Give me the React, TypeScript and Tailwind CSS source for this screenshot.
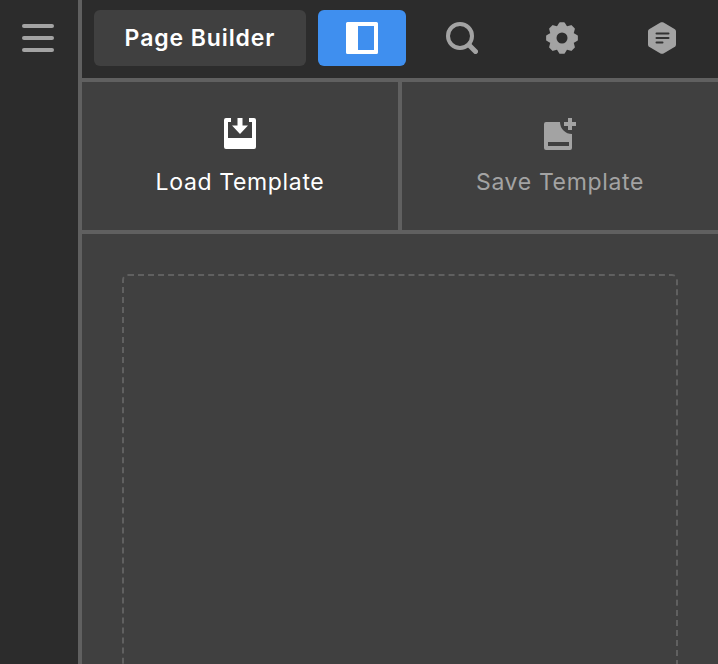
import React from 'react';

function PanelIcon() {
  return (
    <svg width="32" height="32" viewBox="0 0 32 32">
      <path fill="#fff" fillRule="evenodd" d="M0 1.500A1.500 1.500 0 0 1 1.500 0h29A1.500 1.500 0 0 1 32 1.500v29a1.500 1.500 0 0 1-1.500 1.500h-29A1.500 1.500 0 0 1 0 30.500ZM12 4v24h16V4Z" />
    </svg>
  );
}

function SearchIcon() {
  return (
    <svg width="32" height="32" viewBox="0 0 32 32" fill="none" stroke="#a3a3a3">
      <circle cx="14" cy="14" r="12" strokeWidth="4" />
      <path d="M23 23l6.500 6.500" strokeWidth="5" strokeLinecap="round" />
    </svg>
  );
}

// eight rounded teeth round a centre hole
const gearPoints = Array.from({ length: 8 }, (_, i) => {
  const a = (i * Math.PI) / 4 - Math.PI / 2;
  const pt = (angle: number, r: number) => `${16 + r * Math.cos(angle)},${16 + r * Math.sin(angle)}`;
  return [pt(a - 0.13, 15), pt(a + 0.13, 15), pt(a + Math.PI / 8, 11.5)].join(' ');
}).join(' ');

function GearIcon() {
  return (
    <svg width="32" height="32" viewBox="0 0 32 32">
      <polygon points={gearPoints} fill="#a3a3a3" stroke="#a3a3a3" strokeWidth="2" strokeLinejoin="round" />
      <circle cx="16" cy="16" r="5.500" fill="#2c2c2c" />
    </svg>
  );
}

function HexIcon() {
  return (
    <svg width="32" height="32" viewBox="0 0 32 32">
      <path fill="#a3a3a3" d="M14.500.6c.9-.5 2.100-.5 3 0l11 6.300c.9.500 1.500 1.500 1.500 2.600v13c0 1.100-.6 2.100-1.500 2.600l-11 6.300c-.9.500-2.100.5-3 0l-11-6.300C2.600 24.600 2 23.600 2 22.500v-13c0-1.100.6-2.100 1.500-2.600Z" />
      <path stroke="#333333" strokeWidth="2" strokeLinecap="round" d="M10.500 11.500h12M10.500 16h12M10.500 20.500h6" />
    </svg>
  );
}

function LoadIcon() {
  return (
    <svg width="32" height="32" viewBox="0 0 32 32">
      <path
        fill="#fff"
        d="M2 0h5v4H4v16h24V4h-3V0h5a2 2 0 0 1 2 2v27a2 2 0 0 1-2 2H2a2 2 0 0 1-2-2V2a2 2 0 0 1 2-2Z"
      />
      <path fill="#fff" d="M13.500 0h5v7.500H24L16 16 8 7.500h5.500Z" />
    </svg>
  );
}

function SaveIcon() {
  return (
    <svg width="32" height="32" viewBox="0 0 32 32">
      <path
        fill="#a3a3a3"
        fillRule="evenodd"
        d="M2 4h14a12 12 0 0 0 12 12v14a2 2 0 0 1-2 2H2a2 2 0 0 1-2-2V6a2 2 0 0 1 2-2ZM4 24v4h21v-4Z"
      />
      <path fill="#a3a3a3" d="M24 0h4v4h4v4h-4v4h-4V8h-4V4h4Z" />
    </svg>
  );
}

function HamburgerIcon() {
  return (
    <div className="flex w-8 flex-col gap-2">
      <div className="h-1 rounded-full bg-[#a3a3a3]" />
      <div className="h-1 rounded-full bg-[#a3a3a3]" />
      <div className="h-1 rounded-full bg-[#a3a3a3]" />
    </div>
  );
}

export default function App() {
  return (
    <div className="flex h-[664px] w-[718px] overflow-hidden bg-[#404040] font-['Inter',sans-serif]">
      {/* Sidebar */}
      <div className="flex w-[82px] shrink-0 justify-center border-r-4 border-[#606060] bg-[#2c2c2c] pr-[2px] pt-6">
        <div className="h-8">
          <HamburgerIcon />
        </div>
      </div>

      <div className="flex min-w-0 flex-1 flex-col">
        {/* Top bar */}
        <div className="flex h-[82px] shrink-0 items-center border-b-4 border-[#606060] bg-[#2c2c2c] pb-[2px] pl-3">
          <div className="flex h-14 w-[212px] items-center justify-center rounded-md bg-[#404040] text-[23px] font-semibold tracking-[0.9px] text-white">
            Page Builder
          </div>
          <div className="ml-3 flex h-14 w-[88px] items-center justify-center rounded-md bg-[#3f8fef]">
            <PanelIcon />
          </div>
          <div className="flex w-[112px] justify-center">
            <SearchIcon />
          </div>
          <div className="flex w-[88px] justify-center">
            <GearIcon />
          </div>
          <div className="flex w-[112px] justify-center">
            <HexIcon />
          </div>
        </div>

        {/* Template actions */}
        <div className="flex h-[152px] shrink-0 border-b-4 border-[#606060]">
          <div className="flex w-[320px] flex-col items-center border-r-4 border-[#606060] pt-9">
            <LoadIcon />
            <span className="mt-[15px] text-[23px] tracking-[0.65px] text-white">Load Template</span>
          </div>
          <div className="flex flex-1 flex-col items-center pt-9">
            <SaveIcon />
            <span className="mt-[15px] text-[23px] tracking-[0.65px] text-[#a3a3a3]">Save Template</span>
          </div>
        </div>

        {/* Drop area */}
        <div className="flex-1 px-10 pt-10">
          <div className="h-[600px] rounded-md border-2 border-dashed border-[#606060]" />
        </div>
      </div>
    </div>
  );
}
